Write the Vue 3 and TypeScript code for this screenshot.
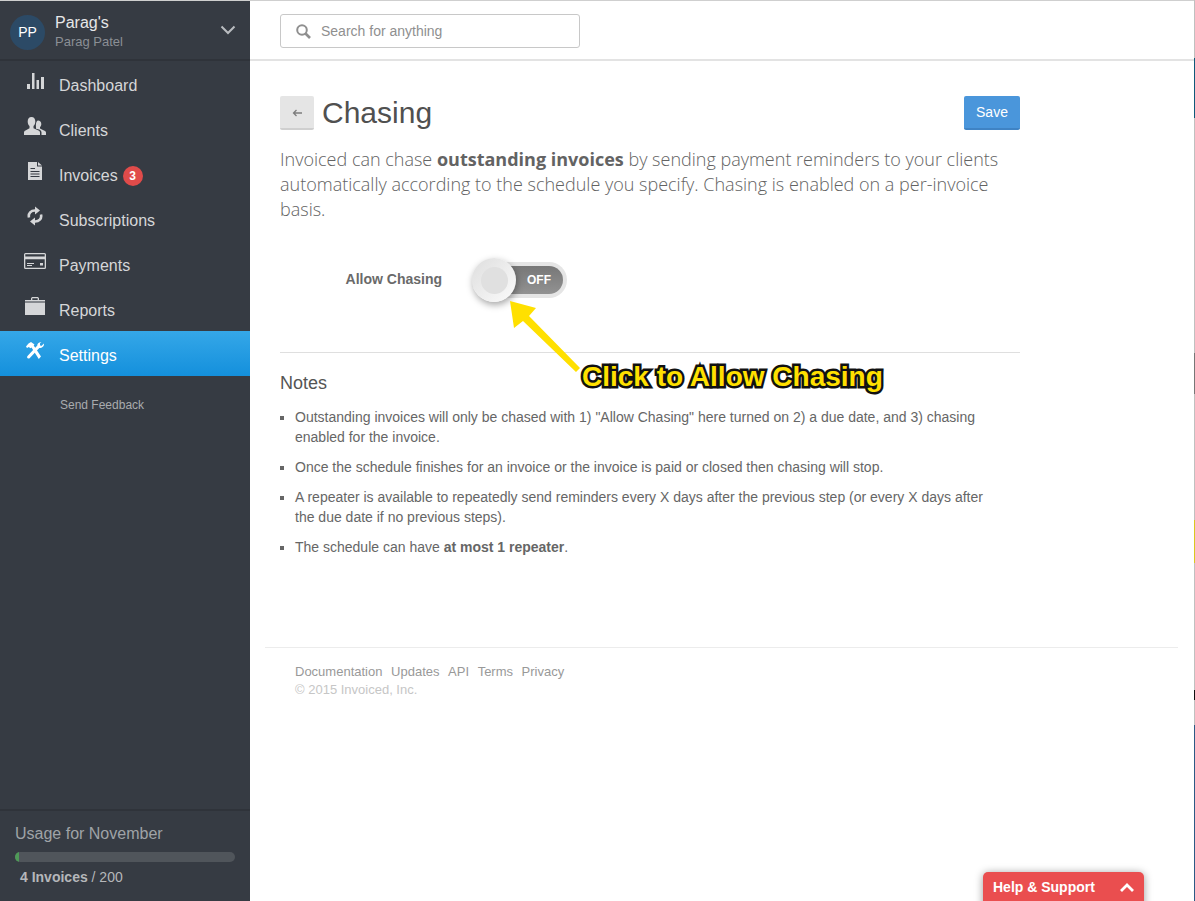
<script setup lang="ts">
interface NavItem {
  label: string;
  icon: string;
  active?: boolean;
  badge?: number;
}

const navItems: NavItem[] = [
  { label: "Dashboard", icon: "chart" },
  { label: "Clients", icon: "users" },
  { label: "Invoices", icon: "file", badge: 3 },
  { label: "Subscriptions", icon: "refresh" },
  { label: "Payments", icon: "card" },
  { label: "Reports", icon: "case" },
  { label: "Settings", icon: "tools", active: true }
];

const footerLinks = ["Documentation", "Updates", "API", "Terms", "Privacy"];
</script>

<template>
  <div class="app">
    <aside class="sidebar">
      <div class="account">
        <div class="avatar">PP</div>
        <div class="account-names">
          <div class="company">Parag's</div>
          <div class="person">Parag Patel</div>
        </div>
        <svg class="caret" width="16" height="10" viewBox="0 0 16 10">
          <path d="M1.500 1.500 8 8l6.500-6.500" fill="none" stroke="#b9bcc0" stroke-width="2" />
        </svg>
      </div>

      <nav class="nav">
        <a v-for="item in navItems" :key="item.label" class="nav-item" :class="{ active: item.active }">
          <span class="nav-icon">
            <svg v-if="item.icon === 'chart'" width="17" height="16" viewBox="0 0 17 16" fill="currentColor">
              <rect x="0" y="11" width="3" height="5" />
              <rect x="5" y="0" width="2.500" height="16" />
              <rect x="9.500" y="7" width="2.500" height="9" />
              <rect x="14" y="4" width="3" height="12" />
            </svg>
            <svg v-else-if="item.icon === 'users'" width="22" height="18" viewBox="0 0 22 18" fill="currentColor">
              <path d="M14 3.500c2 0 3.300 1.500 3.300 3.500 0 1.300-.5 2.400-1.300 3.200v1.300l4.500 2.200c.8.400 1.500 1 1.500 2V18h-4.500v-2.500c0-1.500-1-2.300-2.300-3L12 11.800V10c-.3-2.500.2-6.500 2-6.500z" />
              <path d="M7.500 0C10 0 11.300 2 11.300 4.500c0 2-.7 3.500-1.800 4.500v2.200l5 2.300c.9.400 1.500 1.100 1.500 2.100V18H0v-2.400c0-1 .6-1.700 1.500-2.100l4-2.300V9C4.400 8 3.700 6.500 3.700 4.500 3.700 2 5 0 7.500 0z" />
            </svg>
            <svg v-else-if="item.icon === 'file'" width="14" height="18" viewBox="0 0 14 18" fill="currentColor">
              <path fill-rule="evenodd" d="M0 0h9v4.500h5V18H0zM2.500 6v1H7V6zm0 3v1h9V9zm0 2.500v1h9v-1zm0 2.500v1h9v-1zM10 0l4 3.500h-4z" />
            </svg>
            <svg v-else-if="item.icon === 'refresh'" width="16" height="20" viewBox="0 0 16 20" fill="none" stroke="currentColor" stroke-width="2.600">
              <path d="M2 11.500C1 7.500 4 4.200 8.500 4.500" />
              <path d="M14 8.500c1 4-2 7.300-6.500 7" />
              <path d="M8 0.500l5 4-5 4z" fill="currentColor" stroke="none" />
              <path d="M8 11.500l-5 4 5 4z" fill="currentColor" stroke="none" />
            </svg>
            <svg v-else-if="item.icon === 'card'" width="22" height="16" viewBox="0 0 22 16" fill="currentColor">
              <path fill-rule="evenodd" d="M1.500 0h19A1.500 1.500 0 0 1 22 1.500v13a1.500 1.500 0 0 1-1.500 1.500h-19A1.500 1.500 0 0 1 0 14.500v-13A1.500 1.500 0 0 1 1.500 0zM1.300 1.300v2.200h19.400V1.300zm0 5v8.400h19.400V6.300zM3 10h7v1H3zm0 2h5v1H3zm13-2h3v2.500h-3z" />
            </svg>
            <svg v-else-if="item.icon === 'case'" width="20" height="18" viewBox="0 0 20 18" fill="currentColor">
              <path d="M0 3h6V1.200L7 0h6l1 1.200V3h6v15H0zM7.300 3h5.400V1.300H7.300z" fill-rule="evenodd" />
              <rect x="0" y="4.500" width="20" height="1" fill="#363b43" />
            </svg>
            <svg v-else width="20" height="18" viewBox="0 0 20 18" fill="currentColor">
              <path d="M3.500 1.500 6 0l3.500 2.500-.8 1L16 14.500 13.800 17 6.500 5.500l-1 .7L3.800 5 2 6 1 4.500z" />
              <path d="M19 1.500 16.300 4l-1.300-.8V1.300L16.500.3C14 0 12.200 1.300 12.300 3.500L2.500 14c-.8 1-.3 2.500 1 2.500.5 0 1-.2 1.300-.6L14.300 6c2.500.3 5-1.500 4.700-4.500z" />
            </svg>
          </span>
          <span>{{ item.label }}</span>
          <span v-if="item.badge" class="badge">{{ item.badge }}</span>
        </a>
      </nav>

      <a class="feedback">Send Feedback</a>

      <div class="usage">
        <div class="usage-title">Usage for November</div>
        <div class="usage-track"><div class="usage-fill" :style="{ width: `${(4 / 200) * 100}%` }"></div></div>
        <div class="usage-count"><strong>4 Invoices</strong> / 200</div>
      </div>
    </aside>

    <main class="main">
      <header class="topbar">
        <div class="search">
          <svg width="15" height="15" viewBox="0 0 15 15" fill="none" stroke="#8f8f8f" stroke-width="2">
            <circle cx="6" cy="6" r="4.800" />
            <path d="M9.500 9.500 14 14" stroke-width="2.600" />
          </svg>
          <span>Search for anything</span>
        </div>
      </header>

      <section class="content">
        <div class="title-row">
          <button class="back">
            <svg width="10" height="8" viewBox="0 0 10 8" fill="none" stroke="#7d7d7d" stroke-width="1.300">
              <path d="M10 4H1.500M4.500 1 1.500 4l3 3" />
            </svg>
          </button>
          <h1>Chasing</h1>
          <button class="save">Save</button>
        </div>

        <p class="lead">
          Invoiced can chase <strong>outstanding invoices</strong> by sending payment reminders to your clients
          automatically according to the schedule you specify. Chasing is enabled on a per-invoice basis.
        </p>

        <div class="field">
          <label>Allow Chasing</label>
          <div class="toggle">
            <div class="toggle-inner"><span>OFF</span></div>
            <div class="knob"><div class="knob-dot"></div></div>
          </div>
        </div>

        <hr />

        <h2>Notes</h2>
        <ul>
          <li>Outstanding invoices will only be chased with 1) "Allow Chasing" here turned on 2) a due date, and 3) chasing enabled for the invoice.</li>
          <li>Once the schedule finishes for an invoice or the invoice is paid or closed then chasing will stop.</li>
          <li class="narrow">A repeater is available to repeatedly send reminders every X days after the previous step (or every X days after the due date if no previous steps).</li>
          <li>The schedule can have <strong>at most 1 repeater</strong>.</li>
        </ul>
      </section>

      <footer class="footer">
        <div class="footer-links">
          <a v-for="link in footerLinks" :key="link">{{ link }}</a>
        </div>
        <div class="copyright">© 2015 Invoiced, Inc.</div>
      </footer>
    </main>

    <!-- annotation drawn over the screenshot -->
    <svg class="arrow" width="90" height="90" viewBox="0 0 90 90">
      <path d="M0 0 26 7 19 15 70 67 66 71 13 20 4 27z" fill="#ffe000" />
    </svg>
    <div class="callout">Click to Allow Chasing</div>

    <div class="help">
      <span>Help &amp; Support</span>
      <svg width="14" height="9" viewBox="0 0 14 9" fill="none" stroke="#fff" stroke-width="2.800">
        <path d="M1 8l6-6 6 6" />
      </svg>
    </div>
    <div class="edge"></div>
  </div>
</template>

<style>
html,
body {
  margin: 0;
  background: #fff;
}
</style>

<style scoped>
.app {
  position: relative;
  display: flex;
  width: 1195px;
  height: 901px;
  overflow: hidden;
  font-family: "Liberation Sans", Arial, sans-serif;
  color: #555;
}

.sidebar {
  display: flex;
  flex-direction: column;
  flex: none;
  width: 250px;
  background: #363b43;
  border-top: 1px solid #cfcfcf;
  box-sizing: border-box;
}

.account {
  display: flex;
  align-items: center;
  height: 60px;
  box-sizing: border-box;
  padding: 0 14px 0 10px;
  border-bottom: 2px solid #2f333a;
}

.avatar {
  width: 35px;
  height: 35px;
  margin-top: 4px;
  border-radius: 50%;
  background: #2c4a66;
  color: #fff;
  font-size: 14px;
  line-height: 35px;
  text-align: center;
}

.account-names {
  flex: 1;
  margin: 3px 0 0 10px;
}

.company {
  color: #e6e7e8;
  font-size: 16px;
  line-height: 19px;
}

.person {
  color: #8b8f95;
  font-size: 13px;
  line-height: 19px;
}

.nav-item {
  display: flex;
  align-items: center;
  height: 45px;
  box-sizing: border-box;
  padding: 4px 0 0 59px;
  position: relative;
  color: #d5d6d8;
  font-size: 16px;
}

.nav-item.active {
  background: linear-gradient(#35a7e8, #1490dc);
  color: #fff;
}

.nav-icon {
  position: absolute;
  left: 24px;
  top: 10px;
  width: 22px;
  height: 20px;
  display: flex;
  align-items: center;
  justify-content: center;
}

.badge {
  width: 20px;
  height: 20px;
  margin-left: 5px;
  border-radius: 50%;
  background: #e04b4a;
  color: #fff;
  font-size: 12px;
  font-weight: 700;
  line-height: 20px;
  text-align: center;
}

.feedback {
  margin: 21px 0 0 60px;
  color: #a9abae;
  font-size: 12px;
  line-height: 16px;
}

.usage {
  margin-top: auto;
  height: 92px;
  box-sizing: border-box;
  padding: 13px 15px 0;
  border-top: 2px solid #2f333a;
}

.usage-title {
  color: #9fa3a7;
  font-size: 16px;
  line-height: 20px;
}

.usage-track {
  height: 10px;
  margin-top: 8px;
  border-radius: 5px;
  background: #50555b;
  overflow: hidden;
}

.usage-fill {
  height: 100%;
  background: #4f9a58;
}

.usage-count {
  margin: 6px 0 0 5px;
  color: #b5b7ba;
  font-size: 14px;
  line-height: 18px;
}

.main {
  flex: 1;
  min-width: 0;
}

.topbar {
  height: 61px;
  box-sizing: border-box;
  padding: 14px 30px 0;
  border-top: 1px solid #cfcfcf;
  border-bottom: 2px solid #e3e3e3;
}

.search {
  display: flex;
  align-items: center;
  gap: 10px;
  width: 300px;
  height: 34px;
  box-sizing: border-box;
  margin-top: -1px;
  padding-left: 15px;
  border: 1px solid #c8c8c8;
  border-radius: 3px;
  color: #8f8f8f;
  font-size: 14px;
}

.content {
  width: 740px;
  margin-left: 30px;
  padding-top: 35px;
}

.title-row {
  display: flex;
  align-items: center;
  height: 34px;
}

.back {
  width: 34px;
  height: 34px;
  padding: 0;
  border: 0;
  border-bottom: 2px solid #cfcfcf;
  border-radius: 2px;
  background: #e5e5e5;
}

h1 {
  flex: 1;
  margin: 0 0 0 8px;
  color: #505050;
  font-size: 30px;
  font-weight: 400;
  line-height: 34px;
}

.save {
  width: 56px;
  height: 34px;
  padding: 0;
  border: 0;
  border-bottom: 2px solid #3f83c4;
  border-radius: 2px;
  background: #4a96db;
  color: #fff;
  font-family: inherit;
  font-size: 14px;
}

.lead {
  margin: 17px 0 0;
  color: #636363;
  font-family: "Open Sans", sans-serif;
  font-size: 18px;
  font-weight: 300;
  line-height: 25px;
}

.lead strong {
  font-weight: 700;
}

.field {
  display: flex;
  align-items: center;
  height: 46px;
  margin-top: 35px;
}

.field label {
  width: 162px;
  margin-bottom: 2px;
  color: #6a6a6a;
  font-size: 14px;
  font-weight: 700;
  text-align: right;
}

.toggle {
  position: relative;
  width: 95px;
  height: 36px;
  margin-left: 30px;
  box-sizing: border-box;
  padding: 4px;
  border-radius: 18px;
  background: #e5e5e5;
}

.toggle-inner {
  height: 100%;
  border-radius: 14px;
  background: linear-gradient(#777, #929292);
  color: #fff;
  font-size: 12px;
  font-weight: 700;
  line-height: 28px;
  text-align: right;
  padding-right: 12px;
  box-sizing: border-box;
}

.knob {
  position: absolute;
  left: 0;
  top: -4px;
  width: 44px;
  height: 44px;
  display: flex;
  align-items: center;
  justify-content: center;
  border-radius: 50%;
  background: linear-gradient(135deg, #dedede, #fbfbfb);
  box-shadow: 1px 3px 7px rgba(0, 0, 0, 0.35);
}

.knob-dot {
  width: 27px;
  height: 27px;
  border-radius: 50%;
  background: #e0e0e0;
}

hr {
  height: 1px;
  margin: 49px 0 0;
  border: 0;
  background: #dfdfdf;
}

h2 {
  margin: 19px 0 0;
  color: #555;
  font-size: 18px;
  font-weight: 400;
  line-height: 22px;
}

ul {
  margin: 13px 0 0;
  padding: 0 0 0 15px;
  color: #666;
  font-size: 14px;
  line-height: 20px;
  list-style: square;
}

li {
  margin-bottom: 10px;
}

li.narrow {
  max-width: 700px;
}

.footer {
  margin: 90px 17px 0 15px;
  padding: 15px 0 0 30px;
  border-top: 1px solid #ececec;
  font-size: 13px;
  line-height: 18px;
}

.footer-links {
  display: flex;
  gap: 8.6px;
  color: #999;
}

.copyright {
  color: #c6c6c6;
}

.arrow {
  position: absolute;
  left: 510px;
  top: 301px;
}

.callout {
  position: absolute;
  left: 582px;
  top: 361px;
  color: #ffe000;
  font-size: 28px;
  font-weight: 700;
  line-height: 32px;
  white-space: nowrap;
  -webkit-text-stroke: 5px #111;
  paint-order: stroke fill;
}

.help {
  position: absolute;
  left: 983px;
  top: 872px;
  display: flex;
  align-items: center;
  justify-content: space-between;
  width: 161px;
  height: 40px;
  box-sizing: border-box;
  padding: 0 10px 10px 10px;
  border-radius: 5px 5px 0 0;
  background: #ea4e4f;
  box-shadow: 0 1px 8px rgba(0, 0, 0, 0.4);
  color: #fff;
  font-size: 14px;
  font-weight: 700;
}

.edge {
  position: absolute;
  right: 0;
  top: 0;
  width: 1px;
  height: 901px;
  background: linear-gradient(
    #c0c0c0 0 58px,
    #0f5a7a 58px 118px,
    #c0c0c0 118px 353px,
    #777 353px 394px,
    #c0c0c0 394px 520px,
    #d8c820 520px 563px,
    #c0c0c0 563px 690px,
    #111 690px 700px,
    #c0c0c0 700px 725px,
    #2c5a85 725px 901px
  );
}
</style>
